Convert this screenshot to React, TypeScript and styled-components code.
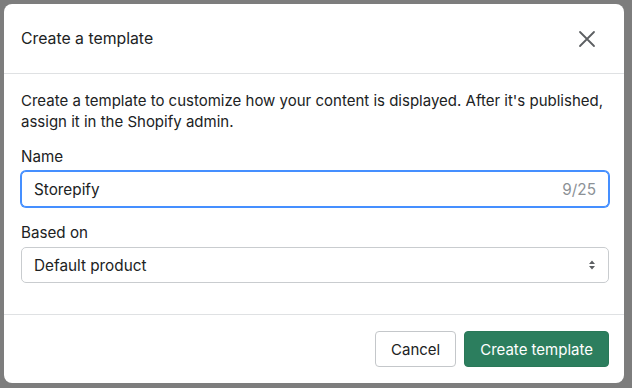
import React, { useState } from 'react'
import styled, { createGlobalStyle } from 'styled-components'

const GlobalStyle = createGlobalStyle`
  html, body {
    margin: 0;
    padding: 0;
    background: #7d7d7d;
    font-family: Inter, "Liberation Sans", Arial, sans-serif;
    -webkit-font-smoothing: antialiased;
  }
  * { box-sizing: border-box; }
`

const Backdrop = styled.div`
  width: 632px;
  height: 388px;
  padding: 4px 8px 5px 4px;
  display: flex;
  overflow: hidden;
`

const Modal = styled.div`
  width: 620px;
  height: 379px;
  background: #fff;
  border-radius: 8px;
  display: flex;
  flex-direction: column;
  overflow: hidden;
`

const Header = styled.div`
  height: 70px;
  flex-shrink: 0;
  display: flex;
  align-items: center;
  justify-content: space-between;
  padding: 0 28px 0 17px;
  border-bottom: 1px solid #dfe1e3;
`

const Title = styled.h2`
  margin: 0;
  font-size: 15.8px;
  font-weight: 400;
  color: #202223;
`

const CloseButton = styled.button`
  border: 0;
  background: none;
  padding: 0;
  width: 18px;
  height: 18px;
  display: flex;
  align-items: center;
  justify-content: center;
  cursor: pointer;
  svg { display: block; }
`

const Body = styled.div`
  flex: 1;
  padding: 16px 15px 0 17px;
  display: flex;
  flex-direction: column;
`

const Intro = styled.p`
  margin: 0 0 15px;
  font-size: 15px;
  line-height: 21px;
  color: #202223;
`

const Field = styled.div<{ $gap?: number }>`
  display: flex;
  flex-direction: column;
  gap: 4px;
  margin-bottom: ${p => p.$gap ?? 0}px;
`

const Label = styled.label`
  font-size: 15.2px;
  line-height: 20px;
  color: #202223;
`

const InputBox = styled.div<{ $focused?: boolean }>`
  height: 36px;
  display: flex;
  align-items: center;
  padding: 0 12px;
  border-radius: 5px;
  border: 1px solid ${p => (p.$focused ? '#458fff' : '#c9cccf')};
  box-shadow: ${p => (p.$focused ? '0 0 0 1px #458fff' : 'none')};
  background: #fff;
`

const Input = styled.input`
  flex: 1;
  border: 0;
  outline: none;
  padding: 0;
  font: inherit;
  font-size: 15.3px;
  color: #202223;
  caret-color: #202223;
  background: transparent;
`

const Counter = styled.span`
  font-size: 15.3px;
  color: #8c9196;
`

const SelectValue = styled.span`
  flex: 1;
  font-size: 15.3px;
  color: #202223;
`

const Footer = styled.div`
  height: 69px;
  flex-shrink: 0;
  border-top: 1px solid #dfe1e3;
  display: flex;
  align-items: center;
  justify-content: flex-end;
  gap: 8px;
  padding: 0 15px 0 17px;
`

const Button = styled.button<{ $primary?: boolean }>`
  height: 36px;
  padding: 0 15px;
  border-radius: 4px;
  font-family: inherit;
  font-size: 15px;
  cursor: pointer;
  color: ${p => (p.$primary ? '#fff' : '#202223')};
  background: ${p => (p.$primary ? '#2c7e5e' : '#fff')};
  border: 1px solid ${p => (p.$primary ? '#2a7858' : '#c4c7ca')};
`

const CloseIcon = () => (
  <svg width="18" height="18" viewBox="0 0 18 18">
    <path d="M2 2L16 16M16 2L2 16" stroke="#5c5f62" strokeWidth="1.8" strokeLinecap="round" />
  </svg>
)

const SelectIcon = () => (
  <svg width="8" height="12" viewBox="0 0 8 12">
    <path d="M4 1.5L7 5H1z M4 10.5L1 7h6z" fill="#5c5f62" />
  </svg>
)

export default function App() {
  const [name, setName] = useState('Storepify')

  return (
    <>
      <GlobalStyle />
      <Backdrop>
        <Modal>
          <Header>
            <Title>Create a template</Title>
            <CloseButton aria-label="Close">
              <CloseIcon />
            </CloseButton>
          </Header>
          <Body>
            <Intro>
              Create a template to customize how your content is displayed. After it's published,
              assign it in the Shopify admin.
            </Intro>
            <Field $gap={16}>
              <Label>Name</Label>
              <InputBox $focused>
                <Input value={name} maxLength={25} onChange={e => setName(e.target.value)} />
                <Counter>{name.length}/25</Counter>
              </InputBox>
            </Field>
            <Field>
              <Label>Based on</Label>
              <InputBox>
                <SelectValue>Default product</SelectValue>
                <SelectIcon />
              </InputBox>
            </Field>
          </Body>
          <Footer>
            <Button>Cancel</Button>
            <Button $primary>Create template</Button>
          </Footer>
        </Modal>
      </Backdrop>
    </>
  )
}
